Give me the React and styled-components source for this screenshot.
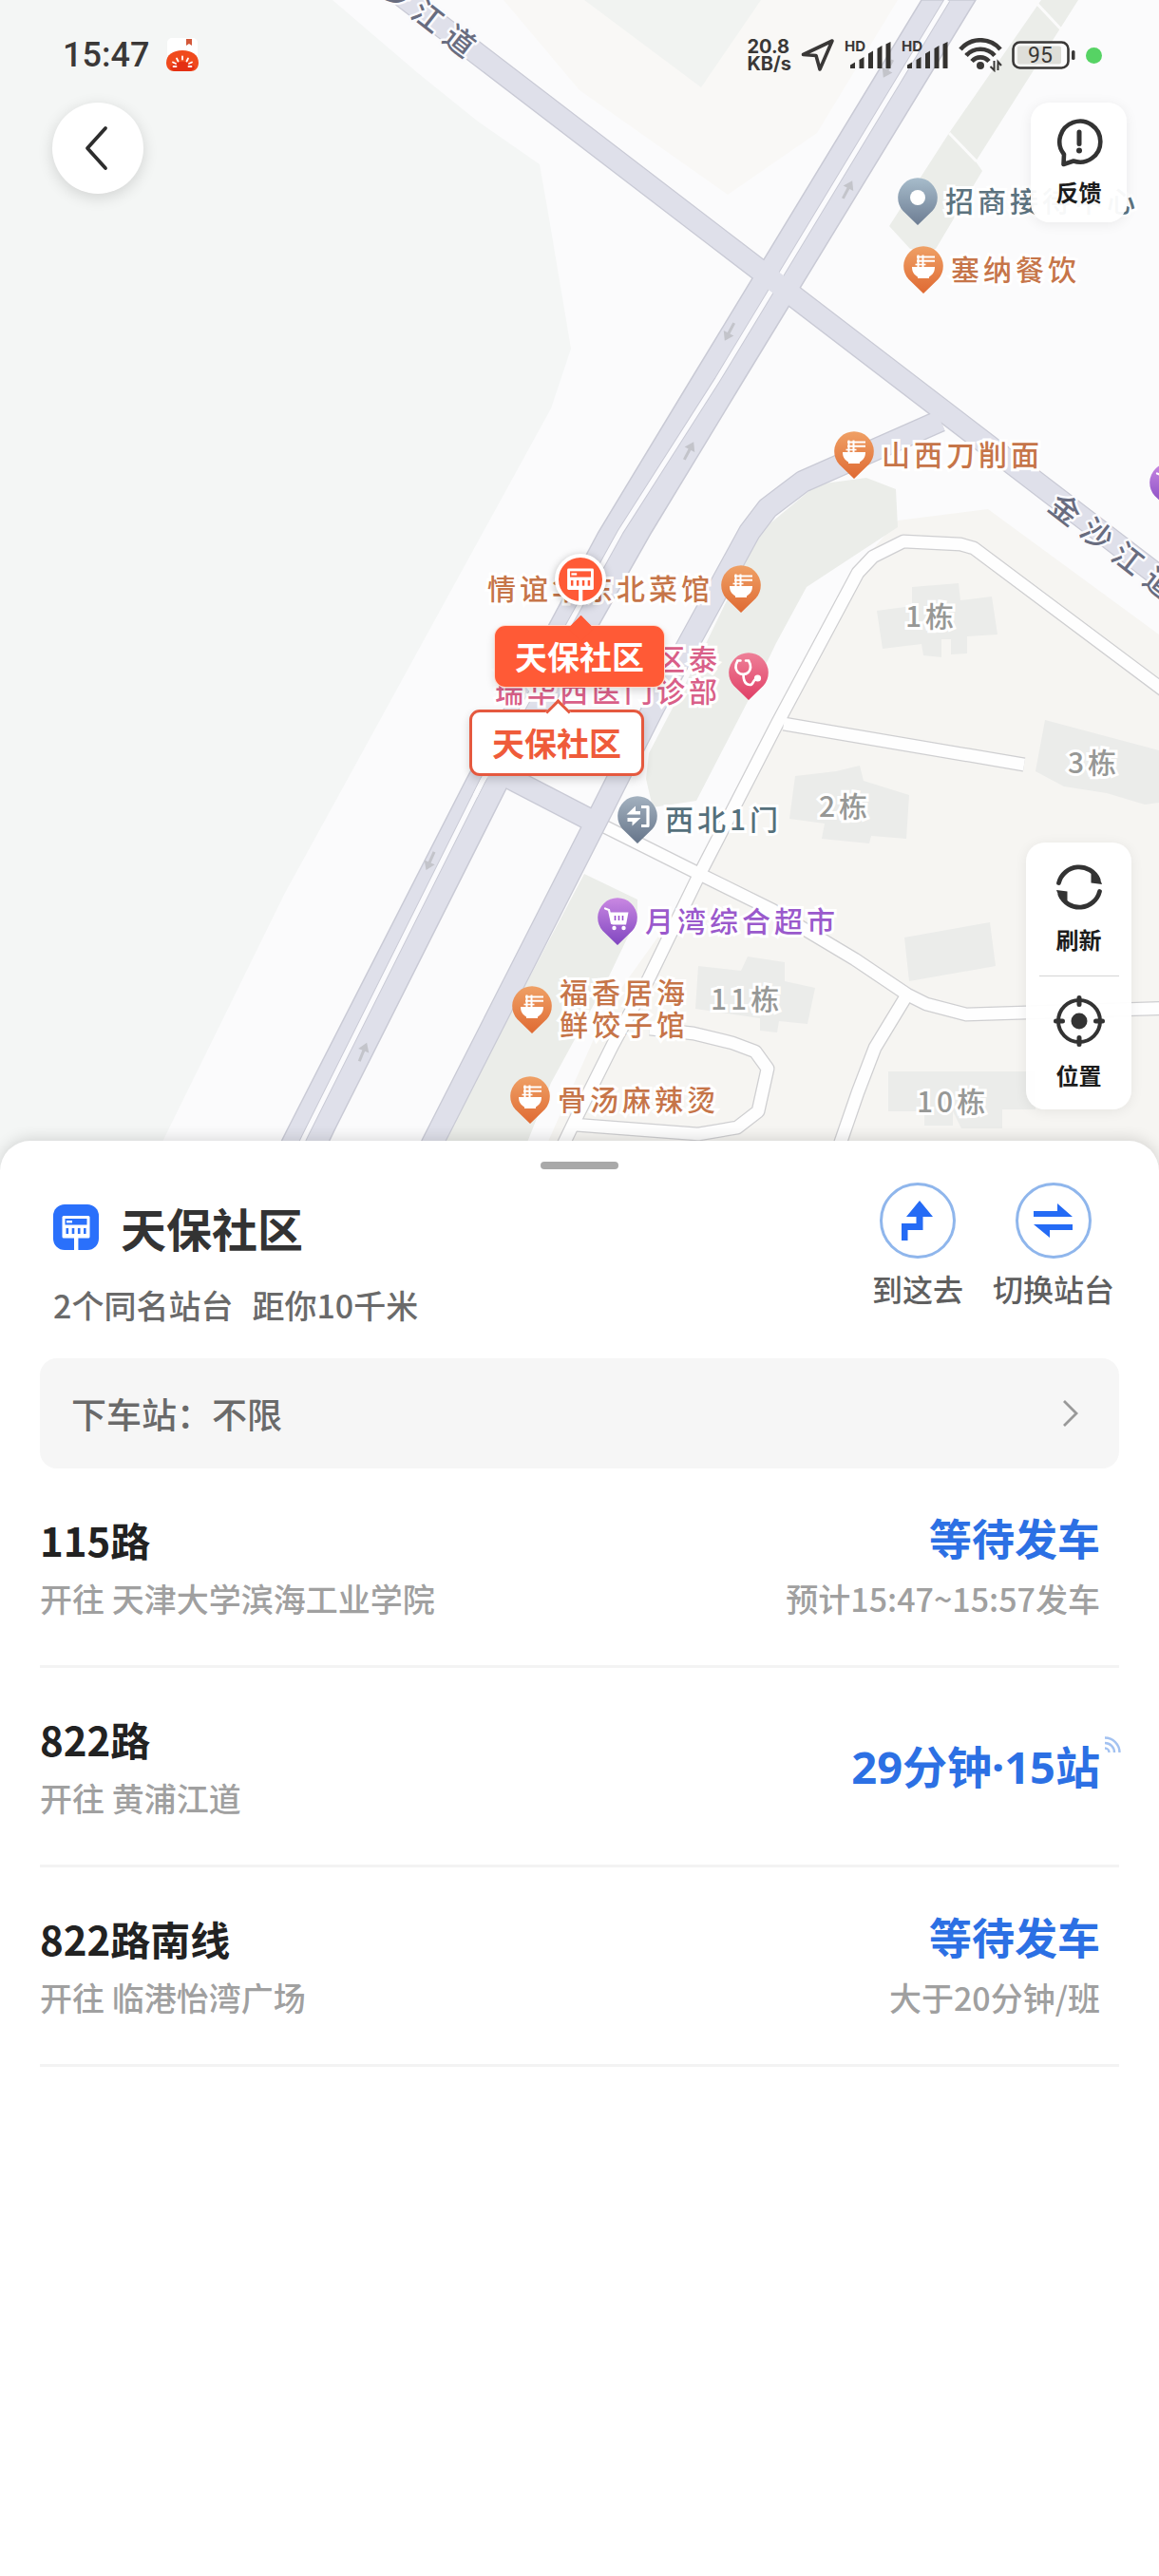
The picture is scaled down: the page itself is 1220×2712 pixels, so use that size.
import React, { useState } from 'react';
import styled, { createGlobalStyle } from 'styled-components';

const GlobalStyle = createGlobalStyle`
 * {
  box-sizing: border-box;
 }
 body {
  margin: 0;
  background: #fff;
  font-family: 'Noto Sans CJK SC', 'Noto Sans', sans-serif;
 }
 button {
  font-family: inherit;
  border: 0;
  padding: 0;
  cursor: pointer;
 }
 h1, h2, p, ul {
  margin: 0;
  padding: 0;
  font-weight: normal;
 }
 svg {
  display: block;
 }
`;

const Screen = styled.main`
 min-height: 100vh;
 display: flex;
 flex-direction: column;
 overflow: hidden;
`;

/* ---------- map ---------- */

const MapArea = styled.section`
 position: relative;
 height: 1240px;
 background: #fafbfb;
 overflow: hidden;
`;

const MapCanvas = styled.div`
 position: relative;
 width: 1220px;
 height: 1240px;
 margin: 0 auto;
`;

const Poi = styled.div`
 position: absolute;
 left: ${({ $x }) => $x}px;
 top: ${({ $y }) => $y}px;
 display: flex;
 flex-direction: ${({ $flip }) => ($flip ? 'row-reverse' : 'row')};
 align-items: center;
 gap: 8px;
`;

const PoiLabel = styled.span`
 padding-bottom: 5px;
 font-size: 30px;
 line-height: 34px;
 font-weight: 500;
 letter-spacing: 4px;
 white-space: pre;
 color: ${({ $color }) => $color};
 -webkit-text-stroke: 6px #fff;
 paint-order: stroke fill;
`;

const MapBubble = styled.button`
 position: absolute;
 left: ${({ $x }) => $x}px;
 top: ${({ $y }) => $y}px;
 padding: 0 ${({ $active }) => ($active ? 18 : 21)}px;
 font-size: 34px;
 line-height: ${({ $active }) => ($active ? 58 : 64)}px;
 font-weight: 700;
 border: 3px solid ${({ $active }) => ($active ? '#ff5a36' : '#e5593f')};
 border-radius: 11px;
 color: ${({ $active }) => ($active ? '#fff' : '#ef5b3a')};
 background: ${({ $active }) => ($active ? '#ff5a36' : '#fff')};
 box-shadow: ${({ $active }) => ($active ? '0 0 0 1px #ffd9cc, ' : '')}0 4px 10px rgba(0, 0, 0, 0.16);
 &::before {
  content: '';
  position: absolute;
  left: 50%;
  top: -10px;
  width: 16px;
  height: 16px;
  margin-left: -8px;
  transform: rotate(45deg);
  background: inherit;
  border-left: 3px solid ${({ $active }) => ($active ? '#ff5a36' : '#e5593f')};
  border-top: 3px solid ${({ $active }) => ($active ? '#ff5a36' : '#e5593f')};
 }
`;

const StopMarker = styled.div`
 position: absolute;
 left: 584px;
 top: 583px;
 width: 54px;
 height: 54px;
 display: flex;
 align-items: center;
 justify-content: center;
 border-radius: 50%;
 border: 4px solid #fff;
 background: #ff5a36;
 box-shadow: 0 2px 8px rgba(0, 0, 0, 0.28);
`;

/* ---------- status bar and floating controls ---------- */

const Overlay = styled.div`
 position: absolute;
 inset: 0 0 auto 0;
`;

const StatusBar = styled.header`
 height: 108px;
 padding: 8px 60px 0 66px;
 display: flex;
 align-items: center;
 justify-content: space-between;
 color: #3a3837;
`;

const StatusGroup = styled.div`
 display: flex;
 align-items: center;
 gap: ${({ $gap }) => $gap}px;
`;

const Clock = styled.time`
 font-family: Roboto, 'Noto Sans', sans-serif;
 font-size: 36px;
 font-weight: 500;
 line-height: 44px;
`;

const NetSpeed = styled.span`
 font-family: Inter, 'Noto Sans', sans-serif;
 font-size: 20px;
 line-height: 18px;
 font-weight: 700;
 white-space: pre;
`;

const Controls = styled.div`
 display: flex;
 justify-content: space-between;
 align-items: flex-start;
 padding: 0 34px 0 55px;
`;

const BackButton = styled.button`
 width: 96px;
 height: 96px;
 display: flex;
 align-items: center;
 justify-content: center;
 border-radius: 50%;
 background: #fff;
 box-shadow: 0 4px 16px rgba(0, 0, 0, 0.14);
`;

const FloatCard = styled.div`
 display: flex;
 flex-direction: column;
 align-items: center;
 border-radius: 20px;
 background: rgba(255, 255, 255, 0.95);
 box-shadow: 0 2px 14px rgba(0, 0, 0, 0.07);
`;

const SideTools = styled(FloatCard)`
 position: absolute;
 right: 29px;
 bottom: 72px;
`;

const ToolButton = styled.button`
 width: ${({ $wide }) => ($wide ? 111 : 101)}px;
 height: ${({ $wide }) => ($wide ? 140 : 126)}px;
 display: flex;
 flex-direction: column;
 align-items: center;
 justify-content: center;
 gap: ${({ $wide }) => ($wide ? 14 : 10)}px;
 background: none;
 font-size: 24px;
 line-height: 32px;
 font-weight: 700;
 color: #1c1c1c;
`;

const ToolDivider = styled.hr`
 width: 84px;
 height: 1px;
 margin: 0;
 border: 0;
 background: #d5d5d5;
`;

/* ---------- bottom sheet ---------- */

const Sheet = styled.section`
 position: relative;
 flex: 1;
 margin-top: -39px;
 padding: 22px 42px 0;
 display: flex;
 flex-direction: column;
 border-radius: 32px 32px 0 0;
 background: #fff;
 box-shadow: 0 -2px 16px rgba(0, 0, 0, 0.14);
`;

const Handle = styled.div`
 width: 82px;
 height: 8px;
 margin: 0 auto;
 border-radius: 4px;
 background: #a9a9a9;
`;

const SheetHead = styled.div`
 display: flex;
 justify-content: space-between;
 padding: 14px 5px 32px 14px;
`;

const StopInfo = styled.div`
 display: flex;
 flex-direction: column;
 gap: 26px;
 padding-top: 15px;
`;

const StopTitle = styled.div`
 display: flex;
 align-items: center;
 gap: 23px;
 h1 {
  font-size: 48px;
  line-height: 64px;
  font-weight: 700;
  color: #333;
 }
`;

const StopMeta = styled.p`
 display: flex;
 gap: 20px;
 font-size: 34px;
 line-height: 48px;
 font-weight: 500;
 color: #6a6a6a;
`;

const Actions = styled.div`
 display: flex;
 align-items: flex-start;
 gap: 31px;
`;

const ActionButton = styled.button`
 display: flex;
 flex-direction: column;
 align-items: center;
 gap: 8px;
 background: none;
 font-size: 32px;
 line-height: 46px;
 font-weight: 500;
 color: #5f5f5f;
`;

const ActionCircle = styled.span`
 width: 80px;
 height: 80px;
 display: flex;
 align-items: center;
 justify-content: center;
 border: 3px solid #8fb6ec;
 border-radius: 50%;
`;

const FilterButton = styled.button`
 display: flex;
 align-items: center;
 justify-content: space-between;
 padding: 30px 42px 30px 33px;
 border-radius: 18px;
 background: #f6f6f6;
 font-size: 37px;
 line-height: 56px;
 font-weight: 500;
 color: #6a6a6a;
`;

const LineList = styled.ul`
 list-style: none;
`;

const LineRow = styled.li`
 display: flex;
 align-items: center;
 justify-content: space-between;
 min-height: 210px;
 padding-right: 20px;
 border-bottom: 3px solid #f3f3f3;
`;

const LineCol = styled.div`
 position: relative;
 display: flex;
 flex-direction: column;
 gap: 10px;
 align-items: ${({ $end }) => ($end ? 'flex-end' : 'flex-start')};
`;

const LineName = styled.h2`
 font-size: 42px;
 line-height: 56px;
 font-weight: 700;
 color: #222;
`;

const LineNote = styled.p`
 font-size: 34px;
 line-height: 48px;
 font-weight: 500;
 color: #a0a0a0;
`;

const LineStatus = styled.p`
 font-family: 'Noto Sans', 'Noto Sans CJK SC', sans-serif;
 font-size: ${({ $live }) => ($live ? 47 : 45)}px;
 line-height: 56px;
 font-weight: 700;
 color: #2c70e4;
`;

const LiveBadge = styled.span`
 position: absolute;
 right: -22px;
 top: -4px;
`;

/* ---------- icons ---------- */

const StopGlyph = ({ size, back }) => (
  <svg width={size} height={size} viewBox="0 0 48 48">
    <rect x="9.5" y="12" width="29" height="23.5" rx="1.5" fill="#fff" />
    <rect x="12.5" y="15" width="23" height="6.5" fill={back} />
    <rect x="14" y="17" width="6" height="2.4" fill="#fff" />
    <g fill={back}>
      <rect x="13.5" y="25" width="2.6" height="6" />
      <rect x="19.7" y="25" width="2.6" height="6" />
      <rect x="25.9" y="25" width="2.6" height="6" />
      <rect x="32" y="25" width="2.6" height="6" />
    </g>
    <rect x="22" y="34" width="4.4" height="14" fill="#fff" />
  </svg>
);

const StopBadge = styled.span`
 width: 48px;
 height: 48px;
 overflow: hidden;
 border-radius: 12px;
 background: #2a70fb;
`;

const TomatoIcon = () => (
  <svg width="34" height="36" viewBox="0 0 34 36">
    <rect x="1" y="0" width="32" height="22" rx="5" fill="#fff" />
    <path d="M21 1h6v7l-3-2-3 2z" fill="#d3583a" />
    <path d="M0 26C0 18 7 13 17 13s17 5 17 13c0 6-4 9-8 9H8c-4 0-8-3-8-9z" fill="#f04a1d" />
    <path d="M4 31c5-8 21-8 26 0-2 3-4 4-6 4H10c-2 0-5-1-6-4z" fill="#e42f12" />
    <path
      d="M17 19.5v3M11 21.5l1.5 3M23 21.5l-1.5 3M7 25.5l3 1.500M27 25.5l-3 1.500M7.500 30h3M26.500 30h-3"
      stroke="#fff"
      strokeWidth="1.8"
      strokeLinecap="round"
    />
  </svg>
);

const LocationArrowIcon = () => (
  <svg width="36" height="36" viewBox="0 0 36 36" fill="none">
    <path d="M33 3L20 33l-4-14.5L2.5 17.5z" stroke="#3a3837" strokeWidth="3.6" strokeLinejoin="round" />
  </svg>
);

const SignalIcon = () => (
  <svg width="50" height="32" viewBox="0 0 50 32">
    <text x="0" y="12" fontFamily="Inter, sans-serif" fontSize="15" fontWeight="700" fill="#3a3837">HD</text>
    <g fill="#34322f">
      <path d="M6 26.5l5-3V30H6z" />
      <path d="M15.5 21l5-3v12h-5z" />
      <path d="M25 14.5l5-3V30h-5z" />
      <path d="M34.5 9l5-3v24h-5z" />
      <path d="M43.5 4.5l5-2.5v28h-5z" />
    </g>
  </svg>
);

const WifiIcon = () => (
  <svg width="46" height="36" viewBox="0 0 46 36" fill="none" stroke="#3a3837" strokeWidth="4.6">
    <path d="M2 12C13-1 33-1 44 12" />
    <path d="M8 18.5c8-9 22-9 30 0" />
    <path d="M14 24.5c5-5.5 13-5.5 18 0" />
    <circle cx="23" cy="29" r="4" fill="#3a3837" stroke="none" />
    <path d="M37.5 24v10l-4-4M41.5 34V25l3.5 4" strokeWidth="2" />
  </svg>
);

const BatteryIcon = () => (
  <svg width="68" height="30" viewBox="0 0 68 30">
    <rect x="1.5" y="1.5" width="58" height="27" rx="7" fill="#fff" fillOpacity="0.5" stroke="#3a3837" strokeWidth="2.6" />
    <rect x="6" y="5.5" width="46" height="19" rx="2" fill="#deded9" />
    <rect x="63" y="10" width="3.5" height="10" rx="1.5" fill="#3a3837" />
    <text x="30" y="23" textAnchor="middle" fontFamily="Roboto, sans-serif" fontSize="23" fill="#3a3837">95</text>
  </svg>
);

const StatusDot = styled.span`
 width: 17px;
 height: 17px;
 border-radius: 50%;
 background: #56d364;
`;

const BackIcon = () => (
  <svg width="28" height="48" viewBox="0 0 28 48" fill="none">
    <path d="M22 3L3 24l19 21" stroke="#2d2d2d" strokeWidth="3.8" strokeLinecap="round" strokeLinejoin="round" />
  </svg>
);

const FeedbackIcon = () => (
  <svg width="50" height="52" viewBox="0 0 50 52" fill="none" stroke="#333" strokeLinecap="round" strokeLinejoin="round">
    <path d="M9 38.5A21.5 21.5 0 1 1 19 45.5L8.5 49z" strokeWidth="4.6" />
    <path d="M25 15v12.5" strokeWidth="5" />
    <circle cx="25" cy="34.5" r="3" fill="#333" stroke="none" />
  </svg>
);

const RefreshIcon = () => (
  <svg width="50" height="50" viewBox="0 0 50 50" fill="none">
    <path d="M3.500 20.5A22 22 0 0 1 45 17" stroke="#333" strokeWidth="4.8" strokeLinecap="round" />
    <path d="M37.500 10.500v10l11.500 1.500-3.500-9z" fill="#333" />
    <path d="M46.500 29.5A22 22 0 0 1 5 33" stroke="#333" strokeWidth="4.8" strokeLinecap="round" />
    <path d="M12.500 39.500v-10L1 28l3.500 9z" fill="#333" />
  </svg>
);

const LocateIcon = () => (
  <svg width="54" height="54" viewBox="0 0 54 54" fill="none" stroke="#333">
    <circle cx="27" cy="27" r="22" strokeWidth="4" />
    <circle cx="27" cy="27" r="8.5" fill="#333" stroke="none" />
    <path d="M27 2.500v7M27 44.500v7M2.500 27h7M44.500 27h7" strokeWidth="5" strokeLinecap="round" />
  </svg>
);

const RouteIcon = () => (
  <svg width="34" height="42" viewBox="0 0 34 42" fill="#256bf5">
    <path d="M19 0l14 17H22.500v14H6.500v11H0V24h15.500v-7H5z" />
  </svg>
);

const SwitchIcon = () => (
  <svg width="42" height="38" viewBox="0 0 42 38" fill="#256bf5">
    <path d="M0 9h25V1l16 14H0z" />
    <path d="M41 29H17v8L0 23h41z" />
  </svg>
);

const ChevronIcon = () => (
  <svg width="18" height="30" viewBox="0 0 18 30" fill="none">
    <path d="M2 2l13 13L2 28" stroke="#999" strokeWidth="2.8" />
  </svg>
);

const LiveIcon = () => (
  <svg width="18" height="18" viewBox="0 0 18 18" fill="none" stroke="#a3c2f1" strokeWidth="2.4">
    <path d="M1 1.5A15.5 15.5 0 0 1 16.5 17" />
    <path d="M1 7A10 10 0 0 1 11 17" />
    <path d="M1 12.5A4.5 4.5 0 0 1 5.5 17" />
  </svg>
);

const pinGlyphs = {
  food: (
    <>
      <path d="M9 22h24c0 6-3 8.5-6 10.5v1.5H15v-1.5C12 30.5 9 28 9 22z" fill="#fff" />
      <path d="M14 11.5h19M14 15.8h19" stroke="#fff" strokeWidth="2" />
      <path d="M15.500 9.500V22M20.500 9.500V22" stroke="#fff" strokeWidth="2" />
      <path d="M12.500 19.500h11" stroke="#fff" strokeWidth="1.6" />
    </>
  ),
  place: <circle cx="21" cy="21" r="8" fill="#fff" />,
  gate: (
    <>
      <path d="M25 11.5h7v20h-7" fill="none" stroke="#fff" strokeWidth="3.2" strokeLinejoin="round" />
      <path d="M9.500 19.500l9.500-9v5.500h5v3.500z" fill="#fff" />
      <path d="M24.500 23l-9 8.500V27h-5v-4z" fill="#fff" />
    </>
  ),
  clinic: (
    <>
      <path
        d="M12.500 8.500h-3C7 13 7 18 10 21c3 2.500 8 2.500 10.500 0 3-3 3-8 .5-12.500h-3"
        fill="none"
        stroke="#fff"
        strokeWidth="2.6"
        strokeLinecap="round"
      />
      <path d="M15.500 23c0 8 3 11 7 11s3-6 7-6.500" fill="none" stroke="#fff" strokeWidth="2.6" />
      <circle cx="30.500" cy="27" r="3.6" fill="#fff" />
    </>
  ),
  shop: (
    <>
      <path d="M8 11.5l4 1.500 3 14" fill="none" stroke="#fff" strokeWidth="2.2" strokeLinecap="round" />
      <path d="M12.500 15.500h20L30 28.500H15.500z" fill="#fff" />
      <path d="M18.500 19v5M22.500 19v5M26.500 19v5" stroke="#9a50cd" strokeWidth="1.6" />
      <circle cx="17.500" cy="32" r="2.2" fill="#fff" />
      <circle cx="27.500" cy="32" r="2.2" fill="#fff" />
    </>
  ),
};

const pinColors = {
  food: ['#efa065', '#df6a33'],
  place: ['#a7bccb', '#6d7d93'],
  gate: ['#a3b1bf', '#66758a'],
  clinic: ['#ee8098', '#e03f66'],
  shop: ['#c988e2', '#8046c0'],
};

const labelColors = {
  food: '#c67549',
  place: '#5c737f',
  gate: '#55707c',
  clinic: '#d95f88',
  shop: '#9a59cc',
};

const Pin = ({ kind }) => (
  <svg width="42" height="50" viewBox="0 0 42 50">
    <defs>
      <linearGradient id={`pin-${kind}`} x1="0" y1="0" x2="0" y2="1">
        <stop offset="0" stopColor={pinColors[kind][0]} />
        <stop offset="1" stopColor={pinColors[kind][1]} />
      </linearGradient>
    </defs>
    <path d="M21 50L5.5 35A20.8 20.8 0 1 1 36.5 35z" fill={`url(#pin-${kind})`} />
    {pinGlyphs[kind]}
  </svg>
);

/* ---------- map drawing ---------- */

const lanes = [
  '-20,-345 400,-22 1240,622',
  '990,443 845,507 808,535 789,560 688,745 630,860 457,1200 436,1242',
  '515,808 625,865',
];

const paths = [
  '636,870 736,920 813,958 900,1010 955,1047 975,1057 1017,1068 1080,1066 1240,1061',
  '955,1047 921,1103 903,1150 884,1205 872,1245',
  '1240,738 1025,577 1011,573 951,570 919,586 903,603 819,760 734,925 683,1030 645,1100 605,1180 576,1240',
  '825,762 1078,805',
  '684,1083 730,1088 771,1098 795,1107 808,1125 798,1170 776,1187 735,1194 604,1184',
];

const buildings = [
  '923,643 960,638 960,618 1009,614 1011,632 1044,628 1050,668 1018,670 1018,688 1001,689 1001,673 991,673 991,692 972,690 970,678 929,683',
  '837,817 880,812 905,806 909,822 957,837 954,883 917,880 915,888 865,883 868,867 831,862',
  '1100,758 1220,790 1220,845 1205,847 1165,835 1120,828 1090,812',
  '952,987 1042,971 1048,1017 957,1033',
  '735,1017 780,1022 787,1007 826,1013 826,1033 858,1040 850,1078 820,1075 818,1087 800,1085 800,1072 732,1062',
  '935,1128 1090,1128 1090,1168 1055,1168 1055,1188 1012,1188 1003,1170 1003,1185 973,1185 973,1170 935,1170',
];

const arrows = [
  [935, 72, 208],
  [892, 200, 28],
  [768, 349, 208],
  [725, 475, 28],
  [453, 906, 204],
  [382, 1108, 22],
];

const CityMap = () => (
  <svg width="1220" height="1240" viewBox="0 0 1220 1240">
    <rect width="1220" height="1240" fill="#fbfbfc" />
    <polygon points="0,0 350,0 440,77 502,127 568,173 578,230 601,367 580,430 377,800 300,940 172,1200 150,1240 0,1240" fill="#f4f6f5" />
    <polygon points="530,0 945,0 860,140 766,205 610,95" fill="#f9f8f6" />
    <polygon points="615,0 801,0 738,92" fill="#f1f3f1" />
    <polygon points="1096,0 1135,0 1027,170 1034,180 985,262 958,262 936,238 999,140" fill="#ebede9" />
    <path d="M999 140l29 30M1088 0l30 32" stroke="#fbfbfb" strokeWidth="3" />
    <polygon points="945,548 1040,536 1220,668 1220,1240 560,1240 640,1060 740,920 900,600" fill="#f6f5f2" />
    <polygon points="860,510 912,503 943,515 945,555 849,618 817,677 793,727 733,843 687,850 680,820 683,793 737,690 800,560" fill="#ebede9" />
    <polygon points="615,920 671,947 671,965 640,1030 580,1140 540,1240 446,1240" fill="#ebede9" />
    {buildings.map(points => <polygon key={points} points={points} fill="#ebecea" />)}

    <g fill="none" strokeLinejoin="round">
      {paths.map(points => <polyline key={points} points={points} stroke="#cfcfd1" strokeWidth="15" />)}
      {paths.map(points => <polyline key={points} points={points} stroke="#fefefe" strokeWidth="12.5" />)}
      {lanes.map(points => <polyline key={points} points={points} stroke="#c9cad5" strokeWidth="24" />)}
    </g>
    <polygon
      points="970,0 727,400 630,560 490,822 302,1190 277,1240 328,1240 352,1190 533,830 686,560 783,400 1027,0"
      fill="#dfe0ea"
      stroke="#c9cad5"
      strokeWidth="1.5"
    />
    <polyline points="997,0 755,400 653,560 508,822 321,1196 300,1240" fill="none" stroke="#c9cad5" strokeWidth="7" />
    <polyline points="997,0 755,400 653,560 508,822 321,1196 300,1240" fill="none" stroke="#fbfbfd" strokeWidth="5" />
    <g fill="none" stroke="#dfe0ea" strokeWidth="21.5" strokeLinejoin="round">
      {lanes.map(points => <polyline key={points} points={points} />)}
    </g>
    <polyline points="514,812 508,822 500,838" fill="none" stroke="#fbfbfd" strokeWidth="5" />

    {arrows.map(([x, y, angle]) => (
      <path
        key={x}
        d="M0 -11l6 9H1.5V10h-3V-2H-6z"
        fill="#c3c4ca"
        transform={`translate(${x} ${y}) rotate(${angle})`}
      />
    ))}

    <g
      fontSize="32"
      fontWeight="500"
      fill="#686c7f"
      stroke="#fafafd"
      strokeWidth="5"
      strokeLinejoin="round"
      paintOrder="stroke"
      textAnchor="middle"
    >
      <text transform="translate(1121 537) rotate(38)" x="0 42 84 126" y="11">金沙江道</text>
      <text transform="translate(384 -34) rotate(38)" x="0 42 84 126" y="11">金沙江道</text>
    </g>
  </svg>
);

const pois = [
  { kind: 'place', x: 945, y: 187, text: '招商接待中心' },
  { kind: 'food', x: 951, y: 259, text: '塞纳餐饮' },
  { kind: 'food', x: 878, y: 454, text: '山西刀削面' },
  { kind: 'food', x: 513, y: 595, text: '情谊华东北菜馆', flip: true },
  { kind: 'clinic', x: 521, y: 675, text: '天津港保税区泰\n瑞华西医门诊部', flip: true },
  { kind: 'gate', x: 650, y: 838, text: '西北1门' },
  { kind: 'shop', x: 629, y: 945, text: '月湾综合超市' },
  { kind: 'food', x: 539, y: 1026, text: '福香居海\n鲜饺子馆' },
  { kind: 'food', x: 537, y: 1133, text: '骨汤麻辣烫' },
  { kind: 'shop', x: 1210, y: 487 },
];

const blocks = [
  { x: 953, y: 630, text: '1栋' },
  { x: 1124, y: 784, text: '3栋' },
  { x: 862, y: 830, text: '2栋' },
  { x: 748, y: 1033, text: '11栋' },
  { x: 965, y: 1141, text: '10栋' },
];

const lines = [
  { name: '115路', to: '天津大学滨海工业学院', status: '等待发车', note: '预计15:47~15:57发车' },
  { name: '822路', to: '黄浦江道', status: '29分钟·15站', live: true },
  { name: '822路南线', to: '临港怡湾广场', status: '等待发车', note: '大于20分钟/班' },
];

const Line = ({ line }) => (
  <LineRow>
    <LineCol>
      <LineName>{line.name}</LineName>
      <LineNote>开往 {line.to}</LineNote>
    </LineCol>
    <LineCol $end>
      <LineStatus $live={line.live}>{line.status}</LineStatus>
      {line.note && <LineNote>{line.note}</LineNote>}
      {line.live && <LiveBadge><LiveIcon /></LiveBadge>}
    </LineCol>
  </LineRow>
);

const App = () => {

  const [platform, setPlatform] = useState(0);

  const switchPlatform = () => {
    setPlatform(platform === 0 ? 1 : 0);
  }

  return (
    <Screen>
      <GlobalStyle />
      <MapArea>
        <MapCanvas>
          <CityMap />
          {blocks.map(b => (
            <Poi key={b.text} $x={b.x} $y={b.y}>
              <PoiLabel $color="#979896">{b.text}</PoiLabel>
            </Poi>
          ))}
          {pois.map(p => (
            <Poi key={`${p.x}-${p.y}`} $x={p.x} $y={p.y} $flip={p.flip}>
              <Pin kind={p.kind} />
              {p.text && <PoiLabel $color={labelColors[p.kind]}>{p.text}</PoiLabel>}
            </Poi>
          ))}
          <StopMarker><StopGlyph size={46} back="#ff5a36" /></StopMarker>
          <MapBubble $x={494} $y={747} $active={platform === 1} onClick={() => setPlatform(1)}>天保社区</MapBubble>
          <MapBubble $x={521} $y={659} $active={platform === 0} onClick={() => setPlatform(0)}>天保社区</MapBubble>
        </MapCanvas>

        <Overlay>
          <StatusBar>
            <StatusGroup $gap={18}>
              <Clock>15:47</Clock>
              <TomatoIcon />
            </StatusGroup>
            <StatusGroup $gap={10}>
              <NetSpeed>{'20.8\nKB/s'}</NetSpeed>
              <LocationArrowIcon />
              <SignalIcon />
              <SignalIcon />
              <WifiIcon />
              <BatteryIcon />
              <StatusDot />
            </StatusGroup>
          </StatusBar>
          <Controls>
            <BackButton aria-label="返回"><BackIcon /></BackButton>
            <FloatCard>
              <ToolButton>
                <FeedbackIcon />
                反馈
              </ToolButton>
            </FloatCard>
          </Controls>
        </Overlay>

        <SideTools>
          <ToolButton $wide>
            <RefreshIcon />
            刷新
          </ToolButton>
          <ToolDivider />
          <ToolButton $wide>
            <LocateIcon />
            位置
          </ToolButton>
        </SideTools>
      </MapArea>

      <Sheet>
        <Handle />
        <SheetHead>
          <StopInfo>
            <StopTitle>
              <StopBadge><StopGlyph size={48} back="#2a70fb" /></StopBadge>
              <h1>天保社区</h1>
            </StopTitle>
            <StopMeta>
              <span>2个同名站台</span>
              <span>距你10千米</span>
            </StopMeta>
          </StopInfo>
          <Actions>
            <ActionButton>
              <ActionCircle><RouteIcon /></ActionCircle>
              到这去
            </ActionButton>
            <ActionButton onClick={switchPlatform}>
              <ActionCircle><SwitchIcon /></ActionCircle>
              切换站台
            </ActionButton>
          </Actions>
        </SheetHead>

        <FilterButton>
          <span>下车站：不限</span>
          <ChevronIcon />
        </FilterButton>

        <LineList>
          {lines.map(line => <Line key={line.name} line={line} />)}
        </LineList>
      </Sheet>
    </Screen>
  )
};

export default App;
